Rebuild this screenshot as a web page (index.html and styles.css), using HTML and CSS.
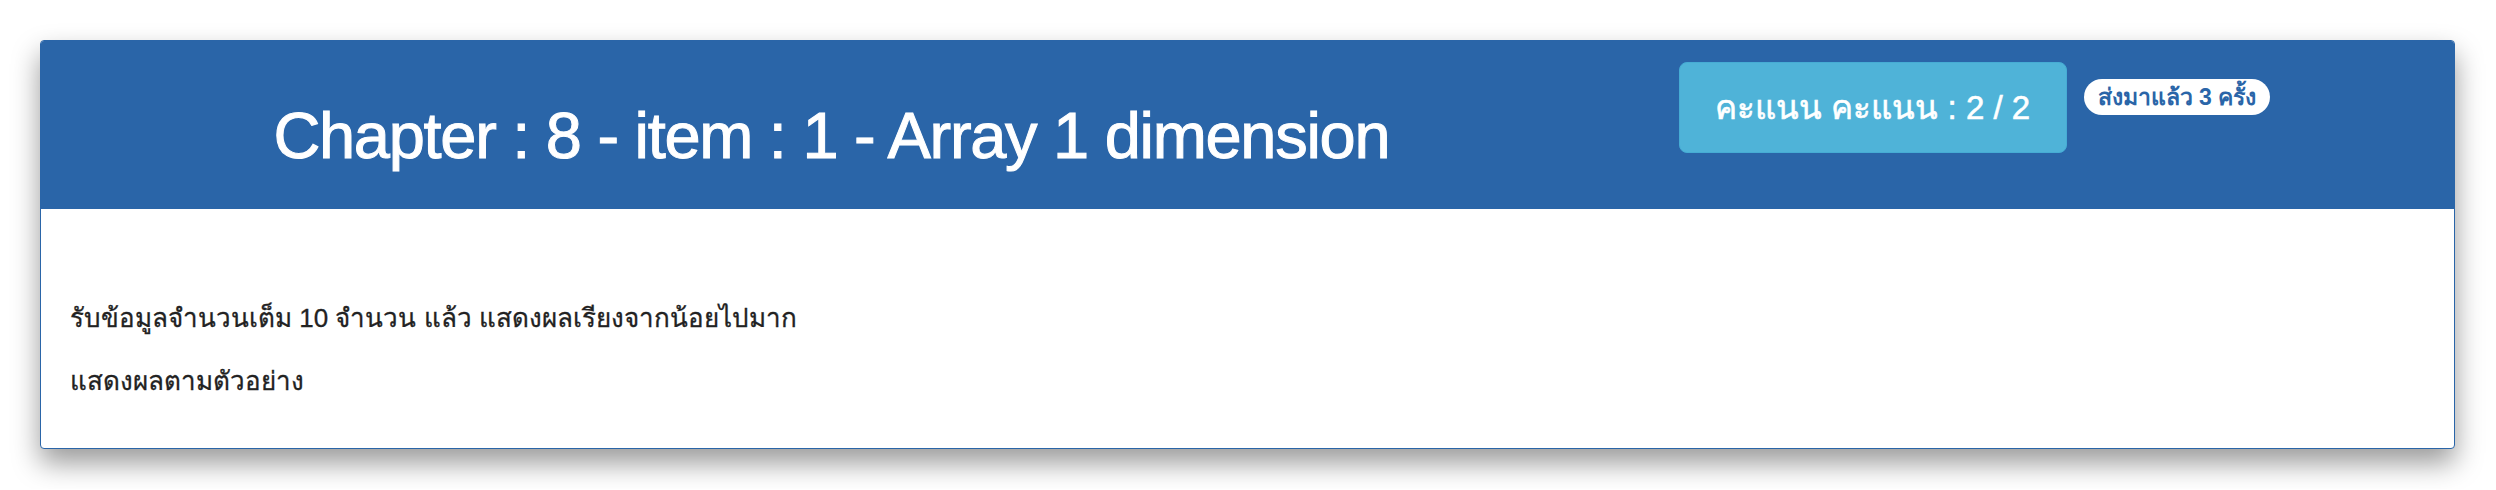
FILE: index.html
```html
<!DOCTYPE html>
<html lang="th">
<head>
<meta charset="utf-8">
<title>Chapter 8 - item 1</title>
<link rel="stylesheet" href="styles.css">
</head>
<body>
<div class="page">
  <div class="card">
    <div class="card-header">
      <div class="title-col">
        <h1 class="title">Chapter : 8 - item : 1 - Array 1 dimension</h1>
      </div>
      <div class="score-col">
        <div class="score">คะแนน คะแนน : 2 / 2</div>
        <span class="sent">ส่งมาแล้ว 3 ครั้ง</span>
      </div>
    </div>
    <div class="card-body">
      <p class="line">รับข้อมูลจำนวนเต็ม 10 จำนวน แล้ว แสดงผลเรียงจากน้อยไปมาก</p>
      <p class="line">แสดงผลตามตัวอย่าง</p>
    </div>
  </div>
</div>
</body>
</html>
```
FILE: styles.css
```css
html, body {
  margin: 0;
  padding: 0;
  background: #ffffff;
}
body {
  font-family: "Liberation Sans", Arial, sans-serif;
  color: #222222;
}
.page {
  padding: 40px 41px 40px 40px;
}
.card {
  background: #ffffff;
  border: 1px solid #2a65a8;
  border-radius: 4px;
  box-shadow: 0 14px 28px rgba(0, 0, 0, 0.4);
  overflow: hidden;
}
.card-header {
  background: #2a65a8;
  height: 168px;
  display: grid;
  grid-template-columns: 2fr 1fr;
}
.title-col {
  text-align: center;
  padding-right: 28px;
}
.title {
  margin: 0;
  padding-top: 60px;
  font-size: 65px;
  line-height: 70px;
  font-weight: normal;
  color: #ffffff;
  letter-spacing: -1.3px;
  -webkit-text-stroke: 1px #ffffff;
}
.score-col {
  display: flex;
  align-items: flex-start;
  padding-top: 21px;
  padding-left: 29px;
}
.score {
  width: 386px;
  height: 89px;
  box-sizing: content-box;
  background: #4fb3d8;
  border: 1px solid #46acd4;
  border-radius: 8px;
  color: #ffffff;
  font-size: 33px;
  line-height: 89px;
  text-align: center;
  -webkit-text-stroke: 0.6px #ffffff;
}
.sent {
  margin-left: 17px;
  margin-top: 17px;
  background: #ffffff;
  color: #2a65a8;
  font-weight: bold;
  font-size: 23px;
  line-height: 36px;
  height: 36px;
  padding: 0 14px;
  border-radius: 18px;
  white-space: nowrap;
}
.card-body {
  padding: 93px 29px 51px 29px;
}
.line {
  margin: 0 0 31px 0;
  font-size: 26px;
  line-height: 32px;
  -webkit-text-stroke: 0.3px #222222;
}
.line:last-child {
  margin-bottom: 0;
}
```
